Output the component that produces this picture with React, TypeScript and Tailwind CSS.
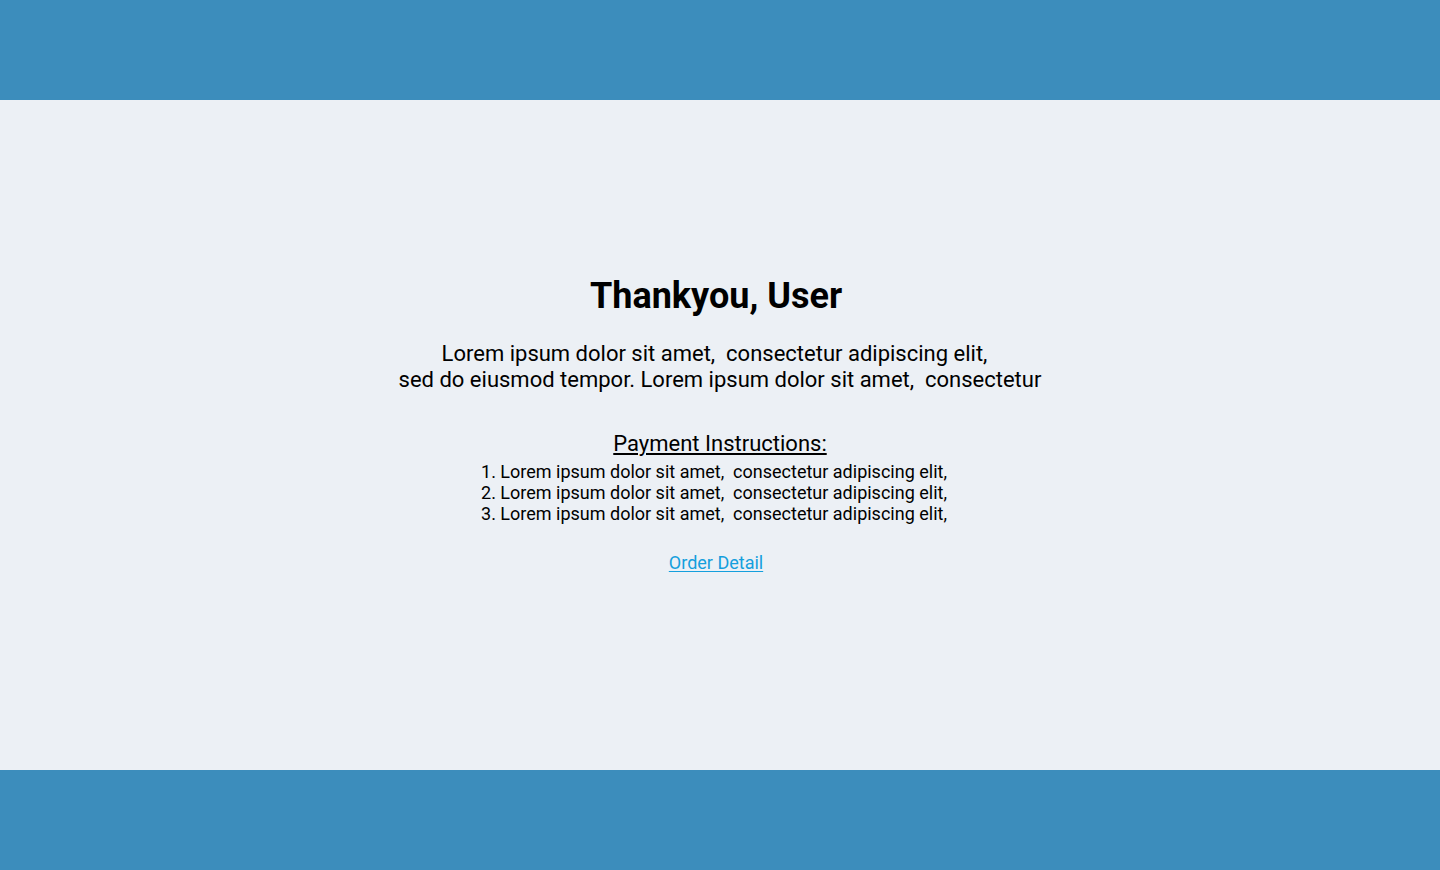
export default function App() {
  const items = [1, 2, 3];
  return (
    <div className="min-h-screen flex flex-col bg-[#ecf0f5]" style={{ fontFamily: 'Roboto, "Noto Sans", sans-serif' }}>
      <header className="h-[100px] bg-[#3c8dbc]"></header>

      <main className="h-[670px] flex flex-col items-center pt-[175px] text-black">
        <h1 className="text-[36px] leading-[42px] font-bold pr-2">Thankyou, User</h1>

        <p className="mt-[24px] text-[22px] leading-[26px] text-center whitespace-pre">
          {'Lorem ipsum dolor sit amet,  consectetur adipiscing elit,  \nsed do eiusmod tempor. Lorem ipsum dolor sit amet,  consectetur'}
        </p>

        <h2 className="mt-[38px] text-[22px] leading-[26px] underline underline-offset-2">Payment Instructions:</h2>
        <ol className="mt-[4px] text-[18px] leading-[21px] whitespace-pre pr-3">
          {items.map((n) => (
            <li key={n}>{`${n}. Lorem ipsum dolor sit amet,  consectetur adipiscing elit,`}</li>
          ))}
        </ol>

        <a href="#" className="mt-[28px] text-[18px] leading-[22px] text-[#149fdd] underline underline-offset-2 pr-2">
          Order Detail
        </a>
      </main>

      <footer className="h-[100px] bg-[#3c8dbc]"></footer>
    </div>
  );
}
